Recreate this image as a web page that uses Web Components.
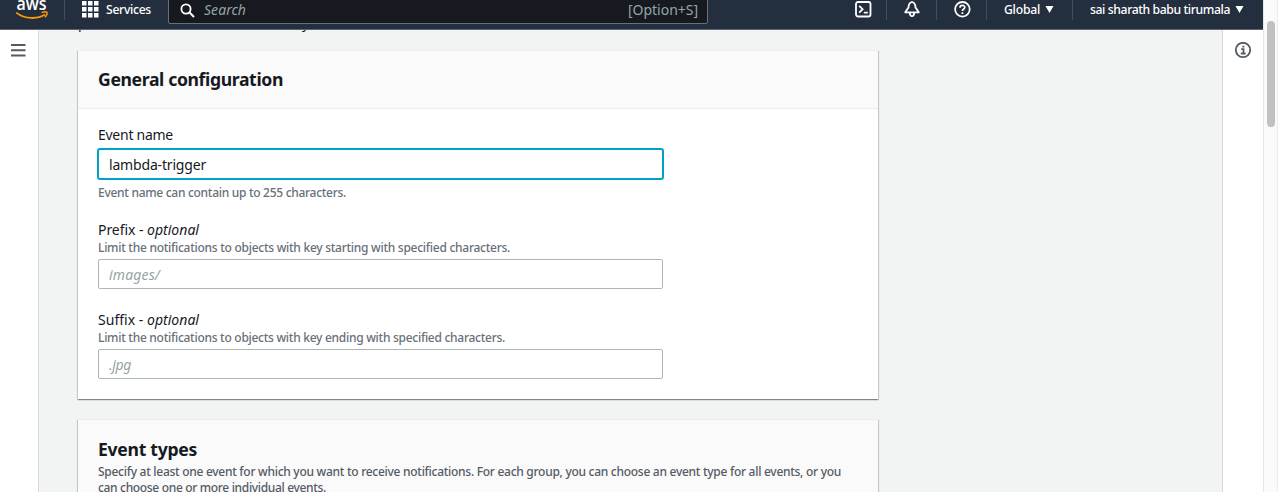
<!DOCTYPE html>
<html lang="en">
<head>
<meta charset="utf-8">
<title>S3 event notification</title>
<style>
html,body{margin:0;height:100%;overflow:hidden}
body{font:14px/20px "Noto Sans","Open Sans",sans-serif;color:#16191f;background:#f2f3f3}
</style>
</head>
<body>
<console-page></console-page>
<script>
const define=(name,html,ready)=>{
  const t=document.createElement('template');t.innerHTML=html;
  customElements.define(name,class extends HTMLElement{
    constructor(){super();this.attachShadow({mode:'open'}).append(t.content.cloneNode(true));}
    connectedCallback(){if(ready)ready(this,this.shadowRoot);}
  });
};

/* One line of text, tracked so that it fills the width in its "w" attribute. */
define('fit-text',`<style>:host{display:block;white-space:nowrap;flex:none}span{display:inline-block;white-space:pre;font-variant-ligatures:none}</style><span><slot></slot></span>`,(el,root)=>{
  const s=root.querySelector('span'),w=+el.getAttribute('w');
  const natural=s.getBoundingClientRect().width;
  s.style.letterSpacing=((w-natural)/el.textContent.length).toFixed(4)+'px';
  el.style.width=w+'px';
});

define('top-nav',`<style>
:host{display:flex;height:30px;width:1263px;box-sizing:border-box;background:#232f3e;border-bottom:1px solid #5b6570;color:#fff;font-weight:500;font-size:12.2px;line-height:20px;align-items:flex-start;overflow:hidden}
svg{display:block;flex:none}
.sep{width:1px;height:20px;background:#414d5c;flex:none}
.search{box-sizing:border-box;width:540px;height:35px;margin:-11px 0 0 17px;border:1px solid #687078;border-radius:2px;background:#16191f;color:#95a5a6;display:flex;padding:10px 9px 0 11px;font-size:14px;font-weight:400}
.search svg{margin:3px 9px 0 0}
.search em{flex:1;color:#95a5a6}
</style>
<svg width="64" height="20" viewBox="0 0 64 20">
<text x="16.4" y="9.8" font-family="Open Sans,sans-serif" font-weight="600" font-size="18.5" textLength="30" lengthAdjust="spacingAndGlyphs" fill="#fff">aws</text>
<path d="M16.2 12.6C25 19.400 37.5 19.400 45 14.600" fill="none" stroke="#f90" stroke-width="1.800"/><path d="M41.6 12.6C44 11.800 46.4 11.6 47 12.4C47.4 13.5 46.3 15.6 45 17.200" fill="none" stroke="#f90" stroke-width="1.5"/></svg>
<i class="sep"></i>
<svg style="margin-left:17px" width="17" height="18" fill="#fff"><path d="M0 1h4.500v4.500H0zM6 1h4.500v4.500H6zM12 1h4.500v4.500H12zM0 7h4.500v4.500H0zM6 7h4.500v4.500H6zM12 7h4.500v4.500H12zM0 13h4.500v4.500H0zM6 13h4.500v4.500H6zM12 13h4.500v4.500H12z"/></svg>
<fit-text w="45" style="margin-left:7px">Services</fit-text>
<div class="search"><svg width="15" height="15" fill="none" stroke="#fff" stroke-width="1.8"><circle cx="6" cy="6" r="4.600"/><path d="M9.300 9.300L14 14" stroke-width="2"/></svg>
<em><fit-text w="42">Search</fit-text></em><fit-text w="70">[Option+S]</fit-text></div>
<svg style="margin-left:147px" width="17" height="19" fill="none" stroke="#fff" stroke-width="1.800"><rect x="1" y="2" width="14.500" height="14.500" rx="2"/><path d="M4.200 5.800L7.600 9.200L4.200 12.600M8.800 12.700h4"/></svg>
<i class="sep" style="margin-left:14px"></i>
<svg style="margin-left:17px" width="17" height="19" fill="none" stroke="#fff" stroke-width="1.800" stroke-linejoin="round"><path d="M8 2C5.600 2.700 4.500 4.300 4.500 7.500L1.200 12.300H14.800L11.500 7.500C11.500 4.300 10.400 2.700 8 2zM5.800 12.500C5.800 17.300 10.200 17.300 10.200 12.500"/></svg>
<i class="sep" style="margin-left:15px"></i>
<svg style="margin-left:17px" width="17" height="19" fill="none" stroke="#fff" stroke-width="1.800"><circle cx="8.400" cy="9.300" r="7.300"/><path d="M6 7.700C6 4.700 10.800 4.700 10.800 7.500C10.800 9 8.400 9 8.400 11M8.400 12.300v1.800" stroke-width="1.700"/></svg>
<i class="sep" style="margin-left:15px"></i>
<fit-text w="36" style="margin-left:17px">Global</fit-text>
<svg style="margin-left:5px" width="9" height="14" fill="#fff"><path d="M.5 6h8L4.500 13z"/></svg>
<i class="sep" style="margin-left:18px"></i>
<fit-text w="140" style="margin-left:17px">sai sharath babu tirumala</fit-text>
<svg style="margin-left:5px" width="9" height="14" fill="#fff"><path d="M.5 6h8L4.500 13z"/></svg>`);

define('side-rail',`<style>:host{display:block;box-sizing:border-box;background:#fff;flex:none}</style><slot></slot>`);

define('config-card',`<style>
:host{display:block;box-sizing:border-box;width:800px;background:#fff;box-shadow:0 1px 1px 0 rgba(0,28,36,.3),1px 1px 1px 0 rgba(0,28,36,.15),-1px 1px 1px 0 rgba(0,28,36,.15);border-top:1px solid #eaeded}
header{box-sizing:border-box;background:#fafafa;border-bottom:1px solid #eaeded;padding:16px 20px 0}
.body{padding:15px 20px 0}
</style><header part="header"><slot name="header"></slot></header><div class="body"><slot></slot></div>`,(el,r)=>{r.querySelector('header').style.height=el.getAttribute('head')+'px';});

define('form-field',`<style>
:host{display:block}
.hint{font-size:12px;line-height:16px;font-weight:500;color:#687078}
.box{box-sizing:border-box;width:565px;height:30px;border:1px solid #aab7b8;border-radius:2px;padding:5px 10px 0;background:#fff}
:host([placeholder]) .box{color:#95a5a6;font-style:italic}
:host([focused]) .box{border-color:#00a1c9;box-shadow:0 0 0 1px #00a1c9}
</style><slot name="label"></slot><div class="hint"><slot name="before"></slot></div><div class="box"><slot></slot></div><div class="hint"><slot name="after"></slot></div>`);

define('console-page',`<style>
:host{display:flex;height:492px;width:1278px}
.view{width:1263px;display:flex;flex-direction:column}
.row{display:flex;flex:1;min-height:0}
.left{width:39px;border-right:1px solid #d5dbdb;padding:14px 0 0 11px}
.right{width:41px;border-left:1px solid #d5dbdb;padding:12px 0 0 12px}
main{flex:1;padding:0 0 0 39px;overflow:hidden;height:462px}
.cut{height:20px;overflow:hidden;color:#16191f;display:flex;justify-content:space-between;width:231px}
.cut fit-text{margin-top:-17px}
h2{margin:0;font-size:17.600px;line-height:26px;font-weight:700}
.first{margin-top:-1px}
.desc{font-size:12px;line-height:15.500px;font-weight:500;color:#545b64}
.label{display:flex;line-height:20px}
.scroll{box-sizing:border-box;width:15px;background:#fafafa;border-left:1px solid #e6e6e6;border-right:1px solid #ededed;padding:21px 0 0 3px}
.thumb{width:8px;height:106px;border-radius:4px;background:#c1c1c1}
svg{display:block}
</style>
<div class="view"><top-nav></top-nav><div class="row">
<side-rail class="left"><svg width="15" height="13" stroke="#545b64" stroke-width="2"><path d="M0 1h14.500M0 6.200h14.500M0 11.400h14.500"/></svg></side-rail>
<main><div class="cut"><fit-text w="9">p</fit-text><fit-text w="7">y</fit-text></div>
<config-card head="58" style="height:349px">
<h2 slot="header" class="first"><fit-text w="185">General configuration</fit-text></h2>
<form-field focused style="padding-top:1px"><fit-text slot="label" w="75" style="margin-bottom:4px">Event name</fit-text><fit-text w="97">lambda-trigger</fit-text><fit-text slot="after" w="248" style="margin-top:6px">Event name can contain up to 255 characters.</fit-text></form-field>
<form-field placeholder style="margin-top:19px"><div slot="label" class="label"><fit-text w="49">Prefix - </fit-text><em><fit-text w="52">optional</fit-text></em></div><fit-text slot="before" w="412" style="margin-bottom:3px">Limit the notifications to objects with key starting with specified characters.</fit-text><fit-text w="51">images/</fit-text></form-field>
<form-field placeholder style="margin-top:21px"><div slot="label" class="label"><fit-text w="49">Suffix - </fit-text><em><fit-text w="52">optional</fit-text></em></div><fit-text slot="before" w="407" style="margin-bottom:3px">Limit the notifications to objects with key ending with specified characters.</fit-text><fit-text w="22">.jpg</fit-text></form-field>
</config-card>
<config-card head="110" style="height:200px;margin-top:20px">
<div slot="header"><h2><fit-text w="99">Event types</fit-text></h2><div class="desc"><fit-text w="743" style="margin-top:2px">Specify at least one event for which you want to receive notifications. For each group, you can choose an event type for all events, or you</fit-text><fit-text w="228">can choose one or more individual events.</fit-text></div></div>
</config-card></main>
<side-rail class="right"><svg width="17" height="17" fill="none" stroke="#545b64" stroke-width="1.800"><circle cx="8" cy="8" r="7.200"/><path d="M6.200 7.200H8.500V11.300M5.800 11.500h4.800M7.300 4.700h2"/></svg></side-rail>
</div></div>
<div class="scroll"><div class="thumb"></div></div>`);
</script>
</body>
</html>
